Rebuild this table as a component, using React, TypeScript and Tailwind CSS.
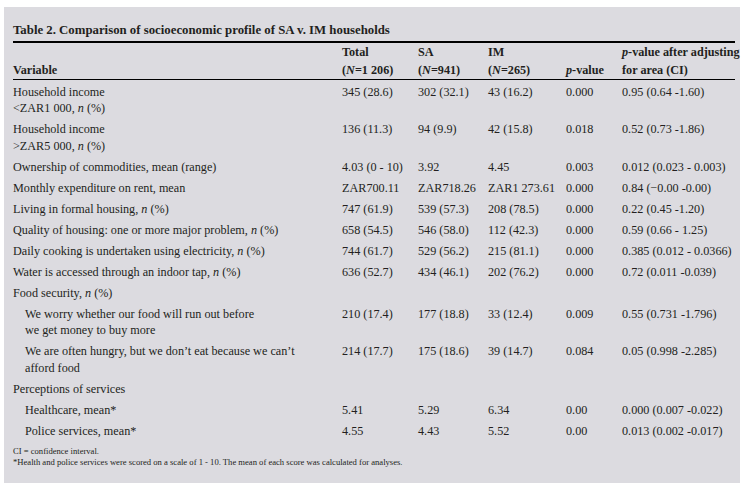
import React from "react";

type Row = {
  label: React.ReactNode;
  total?: string;
  sa?: string;
  im?: string;
  p?: string;
  adj?: string;
  indent?: boolean;
};

const n = <i>n</i>;

const rows: Row[] = [
  {
    label: (
      <>
        Household income
        <br />
        &lt;ZAR1 000, {n} (%)
      </>
    ),
    total: "345 (28.6)",
    sa: "302 (32.1)",
    im: "43 (16.2)",
    p: "0.000",
    adj: "0.95 (0.64 -1.60)",
  },
  {
    label: (
      <>
        Household income
        <br />
        &gt;ZAR5 000, {n} (%)
      </>
    ),
    total: "136 (11.3)",
    sa: "94 (9.9)",
    im: "42 (15.8)",
    p: "0.018",
    adj: "0.52 (0.73 -1.86)",
  },
  {
    label: "Ownership of commodities, mean (range)",
    total: "4.03 (0 - 10)",
    sa: "3.92",
    im: "4.45",
    p: "0.003",
    adj: "0.012 (0.023 - 0.003)",
  },
  {
    label: "Monthly expenditure on rent, mean",
    total: "ZAR700.11",
    sa: "ZAR718.26",
    im: "ZAR1 273.61",
    p: "0.000",
    adj: "0.84 (\u22120.00 -0.00)",
  },
  {
    label: <>Living in formal housing, {n} (%)</>,
    total: "747 (61.9)",
    sa: "539 (57.3)",
    im: "208 (78.5)",
    p: "0.000",
    adj: "0.22 (0.45 -1.20)",
  },
  {
    label: <>Quality of housing: one or more major problem, {n} (%)</>,
    total: "658 (54.5)",
    sa: "546 (58.0)",
    im: "112 (42.3)",
    p: "0.000",
    adj: "0.59 (0.66 - 1.25)",
  },
  {
    label: <>Daily cooking is undertaken using electricity, {n} (%)</>,
    total: "744 (61.7)",
    sa: "529 (56.2)",
    im: "215 (81.1)",
    p: "0.000",
    adj: "0.385 (0.012 - 0.0366)",
  },
  {
    label: <>Water is accessed through an indoor tap, {n} (%)</>,
    total: "636 (52.7)",
    sa: "434 (46.1)",
    im: "202 (76.2)",
    p: "0.000",
    adj: "0.72 (0.011 -0.039)",
  },
  { label: <>Food security, {n} (%)</> },
  {
    label: (
      <>
        We worry whether our food will run out before
        <br />
        we get money to buy more
      </>
    ),
    indent: true,
    total: "210 (17.4)",
    sa: "177 (18.8)",
    im: "33 (12.4)",
    p: "0.009",
    adj: "0.55 (0.731 -1.796)",
  },
  {
    label: (
      <>
        We are often hungry, but we don’t eat because we can’t
        <br />
        afford food
      </>
    ),
    indent: true,
    total: "214 (17.7)",
    sa: "175 (18.6)",
    im: "39 (14.7)",
    p: "0.084",
    adj: "0.05 (0.998 -2.285)",
  },
  { label: "Perceptions of services" },
  {
    label: "Healthcare, mean*",
    indent: true,
    total: "5.41",
    sa: "5.29",
    im: "6.34",
    p: "0.00",
    adj: "0.000 (0.007 -0.022)",
  },
  {
    label: "Police services, mean*",
    indent: true,
    total: "4.55",
    sa: "4.43",
    im: "5.52",
    p: "0.00",
    adj: "0.013 (0.002 -0.017)",
  },
];

export default function App() {
  return (
    <div className="h-[488px] w-[746px] bg-white pl-[4px] pr-[6px] pt-[7px] pb-[5px]">
      <div
        className="h-[476px] w-[736px] bg-[#dcdbe0] pl-[9px] pr-[5px] text-[#231f20]"
        style={{ fontFamily: '"Liberation Serif", "Times New Roman", serif' }}
      >
        <div className="border-b-2 border-black pt-[15px] pb-[2px] text-[12.8px] font-bold leading-[17px]">
          Table 2. Comparison of socioeconomic profile of SA v. IM households
        </div>

        <table className="w-[722px] table-fixed border-collapse text-[12.2px]">
          <colgroup>
            <col className="w-[329px]" />
            <col className="w-[76px]" />
            <col className="w-[70px]" />
            <col className="w-[78px]" />
            <col className="w-[56px]" />
            <col className="w-[113px]" />
          </colgroup>
          <thead>
            <tr className="border-b border-black align-bottom font-bold leading-[17.5px]">
              <th className="p-0 pt-[1px] text-left">Variable</th>
              <th className="p-0 pt-[1px] text-left">
                Total
                <br />(<i>N</i>=1 206)
              </th>
              <th className="p-0 pt-[1px] text-left">
                SA
                <br />(<i>N</i>=941)
              </th>
              <th className="p-0 pt-[1px] text-left">
                IM
                <br />(<i>N</i>=265)
              </th>
              <th className="p-0 pt-[1px] text-left">
                <i>p</i>-value
              </th>
              <th className="whitespace-nowrap p-0 pt-[1px] text-left">
                <i>p</i>-value after adjusting
                <br />
                for area (CI)
              </th>
            </tr>
          </thead>
          <tbody>
            {rows.map((r, i) => {
              const pad = i === 0 ? "pt-[3.75px] pb-[2.25px]" : "py-[2.25px]";
              return (
                <tr key={i} className="align-top leading-[16.5px]">
                  <td className={`p-0 ${pad} ${r.indent ? "pl-[12px]" : ""}`}>
                    {r.label}
                  </td>
                  <td className={`whitespace-nowrap p-0 ${pad}`}>{r.total}</td>
                  <td className={`whitespace-nowrap p-0 ${pad}`}>{r.sa}</td>
                  <td className={`whitespace-nowrap p-0 ${pad}`}>{r.im}</td>
                  <td className={`whitespace-nowrap p-0 ${pad}`}>{r.p}</td>
                  <td className={`whitespace-nowrap p-0 ${pad}`}>{r.adj}</td>
                </tr>
              );
            })}
          </tbody>
        </table>

        <div className="mt-[4px] text-[8.6px] leading-[11px]">
          <p>CI = confidence interval.</p>
          <p>
            *Health and police services were scored on a scale of 1 - 10. The mean of each
            score was calculated for analyses.
          </p>
        </div>
      </div>
    </div>
  );
}
